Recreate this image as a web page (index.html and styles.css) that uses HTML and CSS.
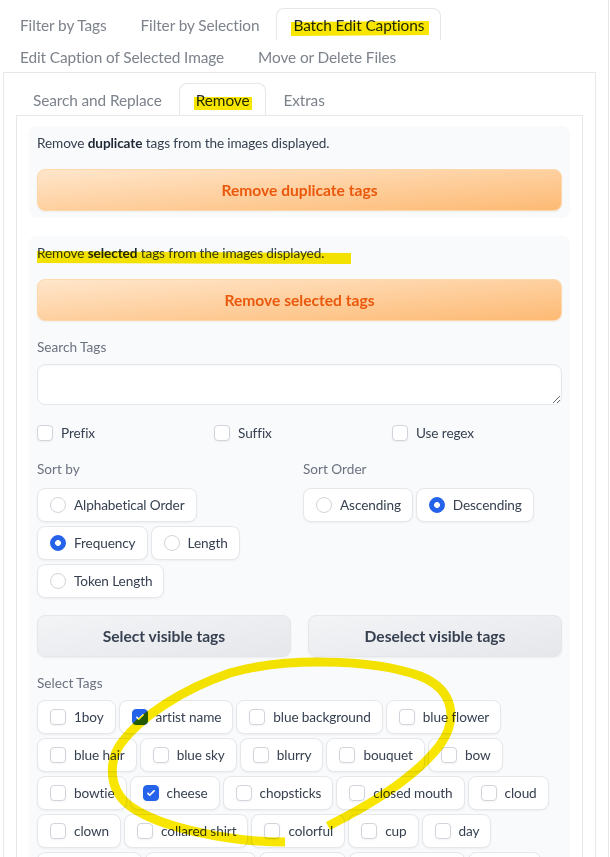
FILE: index.html
```html
<!DOCTYPE html>
<html lang="en">
<head>
<meta charset="utf-8">
<title>Batch Edit Captions</title>
<link rel="stylesheet" href="styles.css">
</head>
<body>
<div class="app">
  <div class="tabs">
    <button class="tab">Filter by Tags</button>
    <button class="tab">Filter by Selection</button>
    <button class="tab active">Batch Edit Captions</button>
    <button class="tab">Edit Caption of Selected Image</button>
    <button class="tab">Move or Delete Files</button>
  </div>
  <div class="panel outer">
    <div class="tabs">
      <button class="tab">Search and Replace</button>
      <button class="tab active">Remove</button>
      <button class="tab">Extras</button>
    </div>
    <div class="panel inner">
      <div class="block">
        <p class="info">Remove <b>duplicate</b> tags from the images displayed.</p>
        <button class="btn primary">Remove duplicate tags</button>
      </div>
      <div class="block">
        <p class="info">Remove <b>selected</b> tags from the images displayed.</p>
        <button class="btn primary">Remove selected tags</button>
        <div class="label">Search Tags</div>
        <textarea class="textbox" rows="2"></textarea>
        <div class="checks">
          <label class="check"><span class="box"></span>Prefix</label>
          <label class="check"><span class="box"></span>Suffix</label>
          <label class="check"><span class="box"></span>Use regex</label>
        </div>
        <div class="sort">
          <div>
            <div class="label first">Sort by</div>
            <div class="chips">
              <span class="chip"><span class="radio"></span>Alphabetical Order</span>
              <span class="chip"><span class="radio on"></span>Frequency</span>
              <span class="chip"><span class="radio"></span>Length</span>
              <span class="chip"><span class="radio"></span>Token Length</span>
            </div>
          </div>
          <div>
            <div class="label first">Sort Order</div>
            <div class="chips">
              <span class="chip"><span class="radio"></span>Ascending</span>
              <span class="chip"><span class="radio on"></span>Descending</span>
            </div>
          </div>
        </div>
        <div class="buttons">
          <button class="btn secondary">Select visible tags</button>
          <button class="btn secondary">Deselect visible tags</button>
        </div>
        <div class="label">Select Tags</div>
        <div class="chips">
          <span class="chip"><span class="box"></span>1boy</span>
          <span class="chip"><span class="box on"><svg viewBox="0 0 16 16" width="14" height="14"><path d="M12.207 4.793a1 1 0 010 1.414l-5 5a1 1 0 01-1.414 0l-2-2a1 1 0 011.414-1.414L6.5 9.086l4.293-4.293a1 1 0 011.414 0z" fill="#fff"/></svg></span>artist name</span>
          <span class="chip"><span class="box"></span>blue background</span>
          <span class="chip"><span class="box"></span>blue flower</span>
          <span class="chip"><span class="box"></span>blue hair</span>
          <span class="chip"><span class="box"></span>blue sky</span>
          <span class="chip"><span class="box"></span>blurry</span>
          <span class="chip"><span class="box"></span>bouquet</span>
          <span class="chip"><span class="box"></span>bow</span>
          <span class="chip"><span class="box"></span>bowtie</span>
          <span class="chip"><span class="box on"><svg viewBox="0 0 16 16" width="14" height="14"><path d="M12.207 4.793a1 1 0 010 1.414l-5 5a1 1 0 01-1.414 0l-2-2a1 1 0 011.414-1.414L6.5 9.086l4.293-4.293a1 1 0 011.414 0z" fill="#fff"/></svg></span>cheese</span>
          <span class="chip"><span class="box"></span>chopsticks</span>
          <span class="chip"><span class="box"></span>closed mouth</span>
          <span class="chip"><span class="box"></span>cloud</span>
          <span class="chip"><span class="box"></span>clown</span>
          <span class="chip"><span class="box"></span>collared shirt</span>
          <span class="chip"><span class="box"></span>colorful</span>
          <span class="chip"><span class="box"></span>cup</span>
          <span class="chip"><span class="box"></span>day</span>
          <span class="chip"><span class="box"></span>facial hair</span>
          <span class="chip"><span class="box"></span>food focus</span>
          <span class="chip"><span class="box"></span>flower</span>
          <span class="chip"><span class="box"></span>from above</span>
          <span class="chip"><span class="box"></span>fork</span>
        </div>
      </div>
    </div>
  </div>
  <svg class="marks" width="610" height="857" viewBox="0 0 610 857" aria-hidden="true">
    <path d="M291 22 L429 21 L429 35 L291 36 Z" fill="#f9e600"/>
    <path d="M194 97 L252 97 L252 110 L194 110 Z" fill="#f9e600"/>
    <path d="M37 251 L351 253 L351 264 L37 263 Z" fill="#f9e600"/>
    <path d="M285 842 C230 842 160 828 130 806 C108 790 108 760 122 742 C140 718 180 690 230 673 C280 658 370 658 420 676 C455 690 458 720 440 745 C415 778 370 805 328 826" fill="none" stroke="#f9e600" stroke-width="9"/>
  </svg>
</div>
</body>
</html>
```

FILE: styles.css
```css
html {
  overflow: hidden;
}

body {
  margin: 0;
  background: #ffffff;
  color: #374151;
  font-family: Lato, "Liberation Sans", sans-serif;
}

.app {
  position: relative;
  width: 609px;
  min-height: 1000px;
  box-sizing: border-box;
  padding: 8px 12px 0 3px;
  border-right: 1px solid #e5e7eb;
}

.tabs {
  display: flex;
  flex-wrap: wrap;
}

.tab {
  height: 32px;
  padding: 0 16px;
  font-family: Lato, "Liberation Sans", sans-serif;
  font-size: 15.4px;
  letter-spacing: -0.1px;
  color: #7d838c;
  background: none;
  border: 1px solid transparent;
  border-bottom: none;
  border-radius: 8px 8px 0 0;
  cursor: pointer;
}

.tab.active {
  border-color: #e5e7eb;
  background: #ffffff;
  color: #1f2937;
}

.panel {
  border: 1px solid #e5e7eb;
  padding: 10px 12px;
}

.block {
  display: flex;
  flex-direction: column;
  background: #f9fafb;
  border-radius: 8px;
  padding: 7px 8px;
}

.block + .block {
  margin-top: 18px;
}

.info {
  margin: 0;
  font-size: 13.6px;
  letter-spacing: -0.1px;
  line-height: 20px;
  color: #374151;
}

.info b {
  font-weight: 700;
  color: #1f2937;
}

.btn {
  height: 42px;
  margin-top: 16px;
  border-radius: 8px;
  font-family: Lato, "Liberation Sans", sans-serif;
  font-size: 15.6px;
  font-weight: 700;
  box-shadow: 0 1px 2px rgba(0, 0, 0, 0.05);
  cursor: pointer;
}

.primary {
  background: linear-gradient(to bottom right, #ffe6cb, #fdba74);
  border: 1px solid #fed7aa;
  color: #ea580c;
}

.secondary {
  background: linear-gradient(to bottom right, #f3f4f6, #e5e7eb);
  border: 1px solid #e5e7eb;
  color: #374151;
}

.label {
  margin: 16px 0 7px;
  font-size: 13.6px;
  line-height: 20px;
  color: #6b7280;
}

.label.first {
  margin: 0 0 9px;
}

.textbox {
  display: block;
  width: 100%;
  height: 41px;
  box-sizing: border-box;
  border: 1px solid #e5e7eb;
  border-radius: 8px;
  background: #ffffff;
  box-shadow: inset 0 1px 2px rgba(0, 0, 0, 0.04);
  resize: vertical;
}

.checks {
  display: grid;
  grid-template-columns: 177px 178px 1fr;
  align-items: center;
  height: 20px;
  margin-top: 18px;
}

.check {
  display: flex;
  align-items: center;
  gap: 8px;
  font-size: 13.6px;
  letter-spacing: -0.1px;
  color: #374151;
}

.box {
  display: flex;
  align-items: center;
  justify-content: center;
  flex: none;
  width: 16px;
  height: 16px;
  box-sizing: border-box;
  border: 1px solid #d1d5db;
  border-radius: 4px;
  background: #ffffff;
  box-shadow: 0 1px 2px rgba(0, 0, 0, 0.05);
}

.box.on {
  background: #2563eb;
  border-color: #2563eb;
}

.sort {
  display: grid;
  grid-template-columns: 254px 1fr;
  column-gap: 12px;
  margin-top: 16px;
}

.chips {
  display: flex;
  flex-wrap: wrap;
  gap: 4px 3px;
}

.chip {
  display: flex;
  align-items: center;
  gap: 8px;
  height: 34px;
  box-sizing: border-box;
  padding: 0 11px 0 12px;
  border: 1px solid #e5e7eb;
  border-radius: 8px;
  background: #ffffff;
  box-shadow: 0 1px 2px rgba(0, 0, 0, 0.05);
  font-size: 13.6px;
  letter-spacing: -0.1px;
  color: #374151;
  white-space: nowrap;
}

.radio {
  flex: none;
  width: 16px;
  height: 16px;
  box-sizing: border-box;
  border: 1px solid #d1d5db;
  border-radius: 50%;
  background: #ffffff;
}

.radio.on {
  border-color: #2563eb;
  background: radial-gradient(circle, #ffffff 0 2.6px, #2563eb 3.2px);
}

.buttons {
  display: grid;
  grid-template-columns: 1fr 1fr;
  gap: 17px;
  margin-top: 17px;
}

.buttons .btn {
  margin-top: 0;
}

.marks {
  position: absolute;
  left: 0;
  top: 0;
  pointer-events: none;
  mix-blend-mode: multiply;
}
```
